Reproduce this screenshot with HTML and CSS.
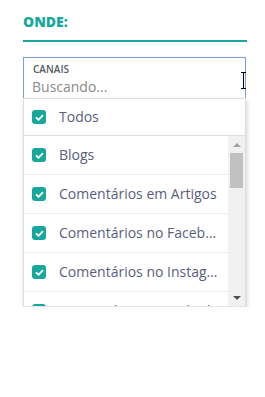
FILE: index.html
```html
<!DOCTYPE html>
<html lang="pt">
<head>
    <meta charset="UTF-8">
    <meta name="viewport" content="width=device-width, initial-scale=1.0">
    <title>Onde</title>
    <link rel="stylesheet" href="styles.css">
</head>
<body>
    <div class="filter">
        <h2 class="filter-title">ONDE:</h2>
        <div class="select">
            <!-- campo de busca -->
            <div class="search">
                <span class="search-label">CANAIS</span>
                <span class="search-input">Buscando...</span>
                <svg class="ibeam" width="7" height="17" viewBox="0 0 7 17">
                    <path d="M1 0.5h5M1 16.5h5M3.5 0.5v16" fill="none" stroke="#000" stroke-width="1"/>
                </svg>
            </div>
            <!-- lista de canais -->
            <div class="dropdown">
                <div class="option option-all">
                    <span class="check"><svg width="13" height="13" viewBox="0 0 13 13"><path d="M3.5 6.8l2 2 4-4.2" fill="none" stroke="#fff" stroke-width="1.8" stroke-linecap="round" stroke-linejoin="round"/></svg></span>
                    <span class="option-text">Todos</span>
                </div>
                <div class="list-wrap">
                    <div class="list">
                        <div class="option">
                            <span class="check"><svg width="13" height="13" viewBox="0 0 13 13"><path d="M3.5 6.8l2 2 4-4.2" fill="none" stroke="#fff" stroke-width="1.8" stroke-linecap="round" stroke-linejoin="round"/></svg></span>
                            <span class="option-text">Blogs</span>
                        </div>
                        <div class="option">
                            <span class="check"><svg width="13" height="13" viewBox="0 0 13 13"><path d="M3.5 6.8l2 2 4-4.2" fill="none" stroke="#fff" stroke-width="1.8" stroke-linecap="round" stroke-linejoin="round"/></svg></span>
                            <span class="option-text">Comentários em Artigos</span>
                        </div>
                        <div class="option">
                            <span class="check"><svg width="13" height="13" viewBox="0 0 13 13"><path d="M3.5 6.8l2 2 4-4.2" fill="none" stroke="#fff" stroke-width="1.8" stroke-linecap="round" stroke-linejoin="round"/></svg></span>
                            <span class="option-text">Comentários no Facebook</span>
                        </div>
                        <div class="option">
                            <span class="check"><svg width="13" height="13" viewBox="0 0 13 13"><path d="M3.5 6.8l2 2 4-4.2" fill="none" stroke="#fff" stroke-width="1.8" stroke-linecap="round" stroke-linejoin="round"/></svg></span>
                            <span class="option-text">Comentários no Instagram</span>
                        </div>
                        <div class="option">
                            <span class="check"><svg width="13" height="13" viewBox="0 0 13 13"><path d="M3.5 6.8l2 2 4-4.2" fill="none" stroke="#fff" stroke-width="1.8" stroke-linecap="round" stroke-linejoin="round"/></svg></span>
                            <span class="option-text">Comentários no LinkedIn</span>
                        </div>
                        <div class="option">
                            <span class="check"><svg width="13" height="13" viewBox="0 0 13 13"><path d="M3.5 6.8l2 2 4-4.2" fill="none" stroke="#fff" stroke-width="1.8" stroke-linecap="round" stroke-linejoin="round"/></svg></span>
                            <span class="option-text">Comentários no YouTube</span>
                        </div>
                    </div>
                    <!-- barra de rolagem -->
                    <div class="scrollbar">
                        <div class="scroll-btn"><span class="arrow-up"></span></div>
                        <div class="scroll-track"><div class="scroll-thumb"></div></div>
                        <div class="scroll-btn"><span class="arrow-down"></span></div>
                    </div>
                </div>
            </div>
        </div>
    </div>
</body>
</html>
```

FILE: styles.css
```css
* {
    margin: 0;
    padding: 0;
    box-sizing: border-box;
}
body {
    font-family: "Open Sans", Arial, sans-serif;
    background-color: #fff;
    color: #5a5e7d;
}
.filter {
    width: 224px;
    margin-left: 23px;
    padding-top: 12px;
}
.filter-title {
    font-size: 14px;
    font-weight: 800;
    line-height: 19px;
    color: #17a89b;
    padding-bottom: 9px;
    border-bottom: 2px solid #17a89b;
}
.select {
    width: 223px;
    margin-top: 15px;
}
.search {
    position: relative;
    display: flex;
    flex-direction: column;
    height: 41px;
    padding: 5px 8px 0 9px;
    border: 1px solid #7b9fd9;
    border-bottom: none;
}
.search-label {
    font-size: 10px;
    font-weight: 600;
    line-height: 13px;
    color: #555a66;
}
.search-input {
    font-size: 14px;
    line-height: 20px;
    margin-top: 1px;
    margin-left: -1px;
    color: #8a8a8a;
}
.ibeam {
    position: absolute;
    left: 216px;
    top: 14px;
}
.dropdown {
    border: 1px solid #dedede;
    border-bottom-color: #e4e4e4;
    box-shadow: 1px 2px 4px rgba(0, 0, 0, 0.18);
    background: #fff;
}
.option {
    display: flex;
    align-items: center;
    gap: 13px;
    height: 39px;
    padding-left: 8px;
    padding-right: 6px;
    border-bottom: 1px solid #efefef;
}
.option-all {
    height: 37px;
    border-bottom-color: #dedede;
}
.check {
    flex: none;
    width: 14px;
    height: 14px;
    border-radius: 3px;
    background: #17a89b;
    display: flex;
    align-items: center;
    justify-content: center;
}
.option-text {
    font-size: 14px;
    line-height: 20px;
    white-space: nowrap;
    overflow: hidden;
    text-overflow: ellipsis;
}
.list-wrap {
    display: flex;
    height: 170px;
}
.list {
    flex: 1;
    min-width: 0;
    overflow: hidden;
}
.scrollbar {
    flex: none;
    width: 17px;
    display: flex;
    flex-direction: column;
    background: #f1f1f1;
}
.scroll-btn {
    height: 17px;
    display: flex;
    align-items: center;
    justify-content: center;
}
.arrow-up {
    width: 0;
    height: 0;
    border-left: 4px solid transparent;
    border-right: 4px solid transparent;
    border-bottom: 4px solid #a3a3a3;
}
.arrow-down {
    width: 0;
    height: 0;
    border-left: 4px solid transparent;
    border-right: 4px solid transparent;
    border-top: 4px solid #505050;
}
.scroll-track {
    flex: 1;
    padding: 0 2px;
}
.scroll-thumb {
    height: 35px;
    background: #c1c1c1;
}
```
